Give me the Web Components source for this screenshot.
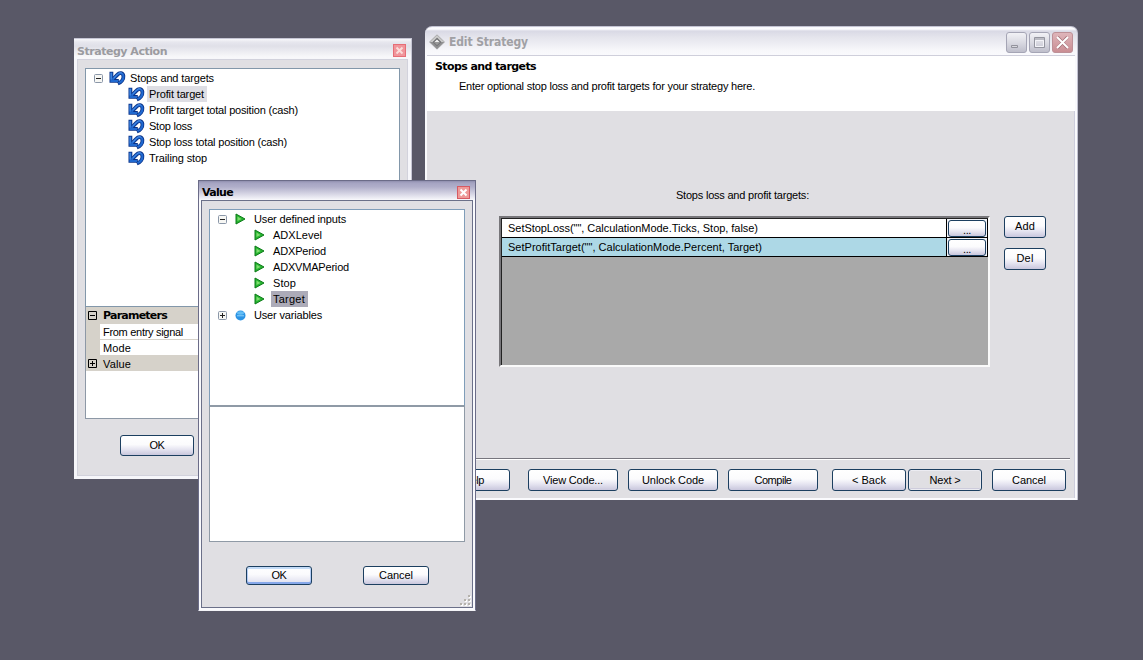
<!DOCTYPE html>
<html lang="en">
<head>
<meta charset="utf-8">
<title>Edit Strategy</title>
<style>
  html, body {
    margin: 0;
    height: 100%;
  }

  body {
    position: relative;
    overflow: hidden;
    background: #595867;
    color: #000;
    font: 11px/16px "Liberation Sans", Arial, sans-serif;
  }

  edit-strategy, strategy-action, value-dialog {
    position: absolute;
  }

  edit-strategy {
    left: 425px;
    top: 26px;
  }

  strategy-action {
    left: 74px;
    top: 38px;
  }

  value-dialog {
    left: 198px;
    top: 180px;
  }
</style>
</head>
<body>
  <edit-strategy></edit-strategy>
  <strategy-action></strategy-action>
  <value-dialog></value-dialog>

<script>
// Text drawn at a set width, given in px by the `w` attribute
class FitText extends HTMLElement {
  connectedCallback() {
    this.attachShadow({mode: 'open'});
    this.shadowRoot.innerHTML = `
      <style>
        :host { display: block; flex: none; }
        span { display: inline-block; white-space: nowrap; vertical-align: top; }
      </style>
      <span><slot></slot></span>
    `;

    const width = Number(this.getAttribute('w'));
    if (!width) return;

    const span = this.shadowRoot.querySelector('span');
    const natural = span.getBoundingClientRect().width;
    const gap = (width - natural) / this.textContent.length;
    span.style.letterSpacing = `${gap}px`;
  }
}

class XpButton extends HTMLElement {
  connectedCallback() {
    this.attachShadow({mode: 'open'});
    this.shadowRoot.innerHTML = `
      <style>
        :host { display: block; flex: none; height: 22px; }
        button {
          display: flex;
          align-items: center;
          justify-content: center;
          box-sizing: border-box;
          width: 100%;
          height: 100%;
          margin: 0;
          padding: 0 0 1px;
          border: 1px solid #1c3f60;
          border-radius: 3px;
          background: linear-gradient(#fff 0%, #fbfbfd 45%, #e6e5f1 70%, #c9c7dd 100%);
          color: #000;
          font: inherit;
          line-height: 14px;
        }
        :host([kind="default"]) button {
          background: linear-gradient(#fff, #fafafd 45%, #dddded);
          box-shadow: inset 0 2px 0 #c4dcf8, inset 0 -2px 0 #86a8ea, inset 1px 0 0 #b5cdf5, inset -1px 0 0 #b5cdf5;
        }
        :host([kind="pressed"]) button {
          background: #e0dfe3;
          box-shadow: inset 0 0 0 1px #ececf2, inset 0 -2px 0 #ceccdc;
        }
        :host([kind="dots"]) button { padding: 3px 0 0; }
        :host([kind="high"]) button { padding: 0 0 3px; }
      </style>
      <button type="button"><slot></slot></button>
    `;
  }
}

class SmallClose extends HTMLElement {
  connectedCallback() {
    this.attachShadow({mode: 'open'});
    this.shadowRoot.innerHTML = `
      <style>
        :host { display: block; flex: none; width: 13px; height: 13px; }
        svg { display: block; }
      </style>
      <svg width="13" height="13" viewBox="0 0 13 13">
        <rect x=".5" y=".5" width="12" height="12" fill="var(--close-fill, #ee9a98)" stroke="var(--close-line, #d65a63)"/>
        <path d="M3.5 3.5l6 6M9.5 3.5l-6 6" stroke="var(--close-mark, #fff)" stroke-width="2"/>
      </svg>
    `;
  }
}

const icons = {
  undo: `
    <svg width="17" height="16" viewBox="0 0 17 16" fill="none">
      <g stroke="#0b3388" stroke-width="3.800">
        <path d="M2.400 1.800v9.100h7.400"/>
        <path d="M3.500 9.800L8.500 4.600C10.500 2.400 14 2.700 14.400 6c.4 3.200-2.200 6.200-5.600 7.600"/>
      </g>
      <g stroke="#2069d0" stroke-width="2">
        <path d="M2.400 2.600v8.300H9"/>
        <path d="M3.500 9.800L8.500 4.600C10.500 2.400 14 2.700 14.400 6c.4 3.200-2.200 5.900-5 7.200"/>
      </g>
      <path d="M2.100 3v6.500M4.500 8.300l4.300-4.500c1.400-1.400 3.400-1.500 4.500-.3" stroke="#5a9ef0" stroke-width=".8"/>
    </svg>`,
  play: `
    <svg width="11" height="12" viewBox="0 0 11 12">
      <path d="M1 1l9 5-9 5z" fill="#27b530" stroke="#0c7a18"/>
      <path d="M2.500 3.500L6.500 6l-4 2" fill="#7fdd6f"/>
    </svg>`,
  ball: `
    <svg width="11" height="11" viewBox="0 0 11 11">
      <circle cx="5.500" cy="5.500" r="5" fill="#2c93e4"/>
      <ellipse cx="5.500" cy="3" rx="3.500" ry="1.700" fill="#63bdf5"/>
      <path d="M2 5.800h7" stroke="#8fd4fb"/>
    </svg>`,
};

class TreeRow extends HTMLElement {
  connectedCallback() {
    const icon = this.getAttribute('icon');
    const toggle = this.getAttribute('toggle');
    const cross = toggle === 'plus' ? 'M4.500 2v5' : '';

    this.attachShadow({mode: 'open'});
    this.shadowRoot.innerHTML = `
      <style>
        :host { display: flex; align-items: center; height: 16px; }
        .toggle { width: 9px; height: 9px; flex: none; margin-right: 5px; }
        .icon { display: flex; justify-content: center; flex: none; width: 17px; }
        .indent { flex: none; width: 19px; }
        svg { display: block; }
        .label { display: flex; height: 16px; margin-left: 3px; padding: 0 3px 0 2px; }
        :host([icon="undo"]) .toggle { margin-right: 6px; }
        :host([icon="undo"]) .label { margin-left: 2px; }
        :host([mark="pale"]) .label { background: #dedee4; }
        :host([mark="strong"]) .label { background: #acabb8; }
      </style>
      <span class="toggle">${toggle ? `
        <svg width="9" height="9" viewBox="0 0 9 9">
          <rect x=".5" y=".5" width="8" height="8" rx="1" fill="#f7f7f4" stroke="#8a97a8"/>
          <path d="M2 4.500h5${cross}" stroke="#222"/>
        </svg>` : ''}</span>
      ${this.hasAttribute('child') ? '<span class="indent"></span>' : ''}
      <span class="icon">${icons[icon]}</span>
      <span class="label"><slot></slot></span>
    `;
  }
}

class StrategyAction extends HTMLElement {
  connectedCallback() {
    this.attachShadow({mode: 'open'});
    this.shadowRoot.innerHTML = `
      <style>
        :host {
          display: flex;
          flex-direction: column;
          box-sizing: border-box;
          width: 338px;
          height: 441px;
          padding: 0 3px 3px;
          background: linear-gradient(#f8f8fb 0, #e7e7ee 3px, #e0e0e8 7px, #f8f8fa 18px, #f6f6fa 21px);
          border: solid #c6c6d4;
          border-width: 1px 1px 0 0;
        }
        .bar {
          display: flex;
          align-items: center;
          justify-content: space-between;
          height: 20px;
          padding: 3px 2px 0 0;
          box-sizing: border-box;
          color: #9b9ba0;
          font: bold 11px/14px "DejaVu Sans", sans-serif;
          --close-fill: #f0959b;
          --close-line: #e66d76;
          --close-mark: #fbdcda;
        }
        .bar fit-text { padding-top: 2px; }
        .body {
          flex: 1;
          border: 1px solid #d2d2dc;
          background: #e0dfe3;
          padding: 8px 7px 0;
        }
        .tree {
          height: 236px;
          padding-top: 1px;
          box-sizing: content-box;
          border: 1px solid #8297aa;
          background: #fff;
        }
        tree-row { padding-left: 8px; }
        .grid {
          height: 112px;
          box-sizing: border-box;
          border: 1px solid #8d98a6;
          border-top: 0;
          background: #fff;
        }
        .row {
          display: flex;
          align-items: center;
          height: 16px;
          background: #d6d2ca;
        }
        .row svg { display: block; margin: 0 6px 0 2px; }
        .row > fit-text { padding-top: 1px; }
        .cell { display: flex; flex: 1; height: 15px; margin-left: 14px; padding-left: 3px; background: #fff; line-height: 16px; }
        .row b { padding-top: 2px; font: bold 11px/16px "DejaVu Sans", sans-serif; }
        xp-button { width: 74px; height: 21px; margin: 16px 0 0 35px; }
      </style>
      <div class="bar"><fit-text w="90">Strategy Action</fit-text><small-close></small-close></div>
      <div class="body">
        <div class="tree">
          <tree-row toggle="minus" icon="undo"><fit-text w="84">Stops and targets</fit-text></tree-row>
          <tree-row child icon="undo" mark="pale"><fit-text w="55">Profit target</fit-text></tree-row>
          <tree-row child icon="undo"><fit-text w="149">Profit target total position (cash)</fit-text></tree-row>
          <tree-row child icon="undo"><fit-text w="43">Stop loss</fit-text></tree-row>
          <tree-row child icon="undo"><fit-text w="138">Stop loss total position (cash)</fit-text></tree-row>
          <tree-row child icon="undo"><fit-text w="58">Trailing stop</fit-text></tree-row>
        </div>
        <div class="grid">
          <div class="row">
            <svg width="9" height="9"><path d="M.5.5h8v8h-8zM2 4.500h5" fill="none" stroke="#000"/></svg>
            <b><fit-text w="64">Parameters</fit-text></b>
          </div>
          <div class="row"><div class="cell"><fit-text w="80">From entry signal</fit-text></div></div>
          <div class="row"><div class="cell"><fit-text w="28">Mode</fit-text></div></div>
          <div class="row">
            <svg width="9" height="9"><path d="M.5.5h8v8h-8zM2 4.500h5M4.500 2v5" fill="none" stroke="#000"/></svg>
            <fit-text w="28">Value</fit-text>
          </div>
        </div>
        <xp-button><fit-text w="15">OK</fit-text></xp-button>
      </div>
    `;
  }
}

class ValueDialog extends HTMLElement {
  connectedCallback() {
    this.attachShadow({mode: 'open'});
    this.shadowRoot.innerHTML = `
      <style>
        :host {
          display: flex;
          flex-direction: column;
          box-sizing: border-box;
          width: 278px;
          height: 431px;
          padding: 0 2px 2px;
          border: 1px solid #6b6c88;
          border-bottom-color: #f4f4f8;
          background: linear-gradient(#8f8fae 0, #a5a4c2 2px, #b0afca 6px, #f2f2f8 18px, #fafafd 19px);
        }
        .bar {
          display: flex;
          align-items: center;
          justify-content: space-between;
          box-sizing: border-box;
          height: 19px;
          padding: 3px 3px 0 1px;
          font: bold 11px/14px "DejaVu Sans", sans-serif;
        }
        .bar fit-text { padding-top: 1px; }
        .body {
          display: flex;
          flex-direction: column;
          flex: 1;
          border: 1px solid #6b7089;
          background: #e0dfe3;
          padding: 8px 7px 0;
        }
        .tree {
          box-sizing: border-box;
          height: 197px;
          padding: 1px 0 0 8px;
          border: 1px solid #7f9db9;
          border-bottom-color: #8f9aa6;
          background: #fff;
        }
        .notes {
          box-sizing: border-box;
          height: 136px;
          border: 1px solid #8f9aa6;
          background: #fff;
        }
        .buttons { display: flex; gap: 51px; padding: 24px 0 0 37px; }
        xp-button { width: 66px; height: 19px; }
        .grip { display: block; margin: auto -6px 1px auto; }
      </style>
      <div class="bar"><fit-text w="31">Value</fit-text><small-close></small-close></div>
      <div class="body">
        <div class="tree">
          <tree-row toggle="minus" icon="play"><fit-text w="92">User defined inputs</fit-text></tree-row>
          <tree-row child icon="play"><fit-text w="49">ADXLevel</fit-text></tree-row>
          <tree-row child icon="play"><fit-text w="53">ADXPeriod</fit-text></tree-row>
          <tree-row child icon="play"><fit-text w="76">ADXVMAPeriod</fit-text></tree-row>
          <tree-row child icon="play"><fit-text w="23">Stop</fit-text></tree-row>
          <tree-row child icon="play" mark="strong"><fit-text w="32">Target</fit-text></tree-row>
          <tree-row toggle="plus" icon="ball"><fit-text w="68">User variables</fit-text></tree-row>
        </div>
        <div class="notes"></div>
        <div class="buttons">
          <xp-button kind="default"><fit-text w="15">OK</fit-text></xp-button>
          <xp-button><fit-text w="34">Cancel</fit-text></xp-button>
        </div>
        <svg class="grip" width="12" height="12">
          <path d="M9 2h2M5 6h2M9 6h2M1 10h2M5 10h2M9 10h2" transform="translate(1 1)" stroke="#fff" stroke-width="2"/>
          <path d="M9 2h2M5 6h2M9 6h2M1 10h2M5 10h2M9 10h2" stroke="#b5b2ac" stroke-width="2"/>
        </svg>
      </div>
    `;
  }
}

class EditStrategy extends HTMLElement {
  connectedCallback() {
    this.attachShadow({mode: 'open'});
    this.shadowRoot.innerHTML = `
      <style>
        :host {
          display: flex;
          flex-direction: column;
          box-sizing: border-box;
          width: 653px;
          height: 474px;
          padding: 0 2px 2px;
          border: 1px solid #c3c3d2;
          border-width: 1px 1px 0 0;
          border-radius: 7px 7px 0 0;
          background: linear-gradient(#f7f7fb 0, #fdfdff 2px, #d9d9e5 4px, #e4e4ec 10px, #f8f8fb 24px, #fafafd 28px);
        }
        .bar {
          display: flex;
          align-items: center;
          height: 28px;
          box-sizing: border-box;
          padding: 2px 2px 0 2px;
          color: #a0a0a4;
          font: bold 12px/16px "DejaVu Sans Condensed", "DejaVu Sans", sans-serif;
        }
        .bar > fit-text { margin: 0 auto 0 4px; }
        .bar > .control { margin-left: 2px; }
        .head { height: 56px; background: #fff; border-top: 1px solid #cfcfdb; box-sizing: border-box; padding: 3px 8px; }
        .head b { display: block; font: bold 11px/16px "DejaVu Sans", sans-serif; }
        .head p { margin: 3px 0 0 24px; }
        .body { display: flex; flex-direction: column; flex: 1; border-right: 1px solid #cdcddc; background: #e0dfe3; }
        .caption { margin: 76px 0 0 249px; height: 29px; }
        .main { display: flex; gap: 14px; margin-left: 72px; }
        .list {
          box-sizing: border-box;
          width: 491px;
          height: 151px;
          border: 2px solid;
          border-color: #77767a #fafafa #fafafa #77767a;
          background: #a9a9a9;
        }
        .list > div { border: solid #222; border-width: 1px 0 0 1px; height: 100%; box-sizing: border-box; }
        .row {
          display: flex;
          align-items: center;
          height: 19px;
          box-sizing: border-box;
          border-right: 1px solid #000;
          border-bottom: 1px solid #000;
          background: #fff;
        }
        .row.active { background: #add8e6; }
        .row > fit-text { margin: 0 auto 0 6px; }
        .slot { display: flex; align-items: center; justify-content: center; width: 40px; height: 18px; border-left: 1px solid #000; background: #f1f3f8; }
        .slot xp-button { width: 38px; height: 17px; }
        .side { display: flex; flex-direction: column; gap: 10px; }
        .side xp-button { width: 42px; }
        .footer { display: flex; margin: 91px 4px 0 4px; padding-top: 10px; border-top: 1px solid #77767e; box-shadow: inset 0 1px #fff; }
        .footer xp-button { width: 90px; margin-right: 10px; }
        .footer .short { width: 74px; }
      </style>
      <div class="bar">
        <svg width="16" height="16" viewBox="0 0 16 16">
          <path d="M8 .8L15.500 8 8 15.200.5 8z" fill="#cacaca" stroke="#999" stroke-width=".7"/>
          <path d="M.8 8h14.400L8 15z" fill="#8e8e90"/>
          <path d="M8 4.500L11.500 8 8 11.500 4.500 8z" fill="#f0f0f0" stroke="#6d6d70" stroke-width="1.200"/>
          <path d="M5 8h6l-3 3z" fill="#999"/>
        </svg>
        <fit-text w="79">Edit Strategy</fit-text>
        <svg class="control" width="21" height="21" viewBox="0 0 21 21">
          <defs><linearGradient id="g" x1="0" y1="0" x2="0" y2="1"><stop stop-color="#f3f3f7"/><stop offset=".5" stop-color="#dadae2"/><stop offset="1" stop-color="#bdbdca"/></linearGradient></defs>
          <rect x=".5" y=".5" width="20" height="20" rx="2.500" fill="url(#g)" stroke="#a5a5b5"/>
          <path d="M5.500 13.500h6v2h-6z" fill="#d8d8de" stroke="#92929c"/>
        </svg>
        <svg class="control" width="21" height="21" viewBox="0 0 21 21">
          <rect x=".5" y=".5" width="20" height="20" rx="2.500" fill="url(#g)" stroke="#a5a5b5"/>
          <path d="M5.500 5.500h10v10h-10zM5 7h11" fill="none" stroke="#94959f"/>
          <path d="M6.500 8.500h8v6h-8z" fill="none" stroke="#f4f4f8"/>
        </svg>
        <svg class="control" width="21" height="21" viewBox="0 0 21 21">
          <defs><linearGradient id="r" x1="0" y1="0" x2="0" y2="1"><stop stop-color="#dfb6bb"/><stop offset="1" stop-color="#c98c92"/></linearGradient></defs>
          <rect x=".5" y=".5" width="20" height="20" rx="2.500" fill="url(#r)" stroke="#bd9097"/>
          <path d="M5.500 5l10 11M15.500 5l-10 11" stroke="#a06d75" stroke-width="3.200"/>
          <path d="M5 5l11 11M16 5L5 16" stroke="#fff" stroke-width="2"/>
        </svg>
      </div>
      <div class="head">
        <b><fit-text w="101">Stops and targets</fit-text></b>
        <p><fit-text w="296">Enter optional stop loss and profit targets for your strategy here.</fit-text></p>
      </div>
      <div class="body">
        <div class="caption"><fit-text w="133">Stops loss and profit targets:</fit-text></div>
        <div class="main">
          <div class="list"><div>
            <div class="row">
              <fit-text w="250">SetStopLoss("", CalculationMode.Ticks, Stop, false)</fit-text>
              <div class="slot"><xp-button kind="dots"><fit-text w="8">...</fit-text></xp-button></div>
            </div>
            <div class="row active">
              <fit-text w="254">SetProfitTarget("", CalculationMode.Percent, Target)</fit-text>
              <div class="slot"><xp-button kind="dots"><fit-text w="8">...</fit-text></xp-button></div>
            </div>
          </div></div>
          <div class="side">
            <xp-button kind="high"><fit-text w="20">Add</fit-text></xp-button>
            <xp-button kind="high"><fit-text w="17">Del</fit-text></xp-button>
          </div>
        </div>
        <div class="footer">
          <xp-button style="width: 79px; margin-right: 18px"><fit-text w="21" style="margin-left: 6px">Help</fit-text></xp-button>
          <xp-button><fit-text w="60">View Code...</fit-text></xp-button>
          <xp-button><fit-text w="62">Unlock Code</fit-text></xp-button>
          <xp-button style="margin-right: 14px"><fit-text w="37">Compile</fit-text></xp-button>
          <xp-button class="short" style="margin-right: 2px"><fit-text w="34">&lt; Back</fit-text></xp-button>
          <xp-button class="short" kind="pressed"><fit-text w="31">Next &gt;</fit-text></xp-button>
          <xp-button class="short"><fit-text w="34">Cancel</fit-text></xp-button>
        </div>
      </div>
    `;
  }
}

customElements.define('xp-button', XpButton);
customElements.define('small-close', SmallClose);
customElements.define('tree-row', TreeRow);
customElements.define('edit-strategy', EditStrategy);
customElements.define('strategy-action', StrategyAction);
customElements.define('value-dialog', ValueDialog);
customElements.define('fit-text', FitText);
</script>
</body>
</html>
